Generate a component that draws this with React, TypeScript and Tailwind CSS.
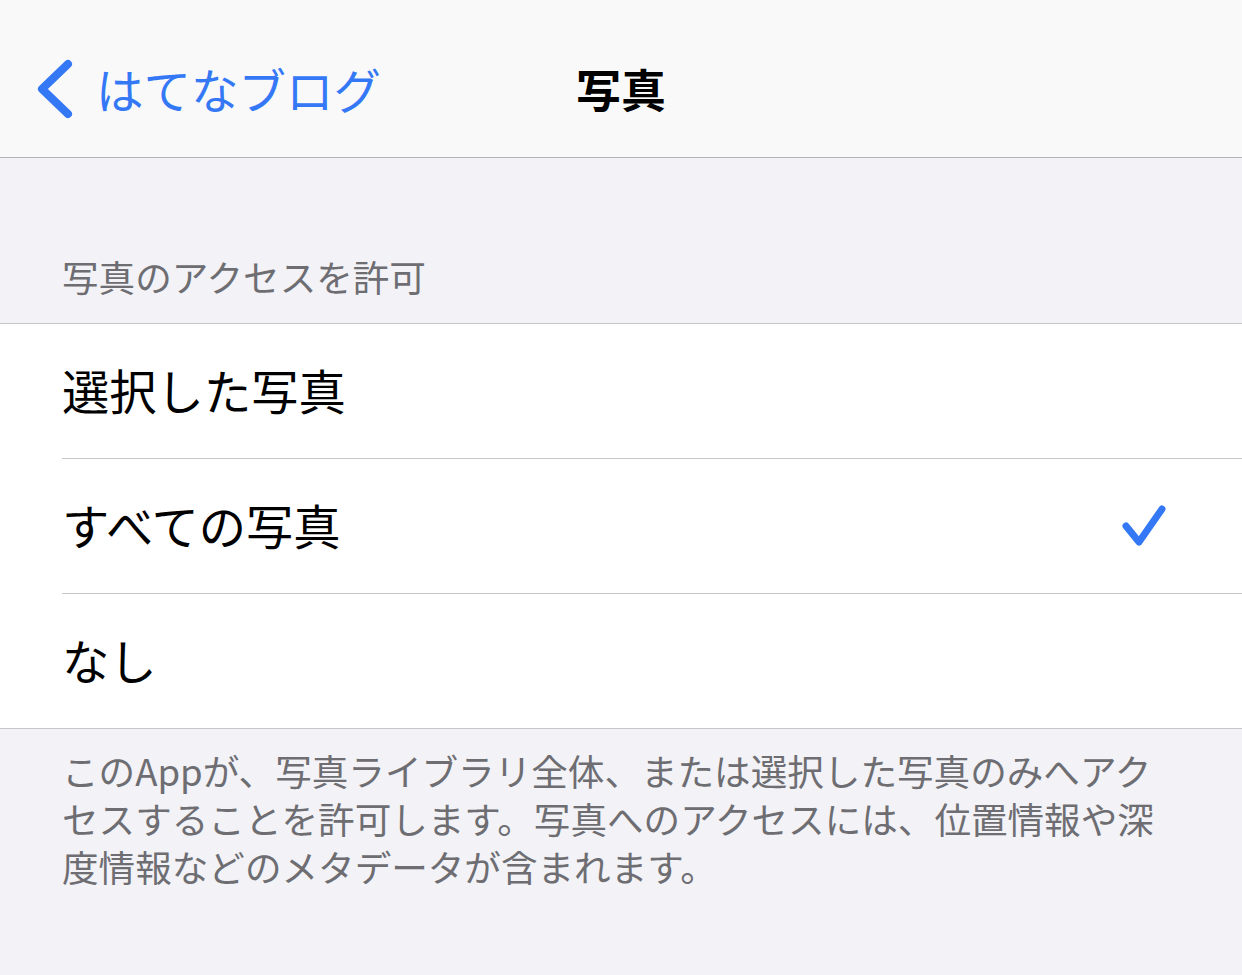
import React from "react";

const font = { fontFamily: '"Noto Sans CJK JP", "Noto Sans", sans-serif' };

export default function App() {
  return (
    <div className="w-[1242px] h-[975px] bg-[#f2f2f7] flex flex-col" style={font}>
      {/* Nav bar */}
      <div className="h-[158px] bg-[#f9f9f9] border-b border-[#b3b3b5] relative flex items-center pt-[20px]">
        <div className="flex items-center pl-[36px]">
          <svg width="40" height="62" viewBox="0 0 40 62" className="mr-[20px] mt-[2px]">
            <polyline points="32,5 6,30 32,55" fill="none" stroke="#3478f6" strokeWidth="8" strokeLinecap="round" strokeLinejoin="round" />
          </svg>
          <span className="text-[47.5px] leading-none text-[#3478f6]">はてなブログ</span>
        </div>
        <div className="absolute left-0 right-0 top-[20px] bottom-0 flex items-center justify-center pointer-events-none">
          <span className="text-[45px] leading-none font-bold text-black">写真</span>
        </div>
      </div>

      {/* Section header */}
      <div className="h-[165px] flex items-end pb-[28px] pl-[62px]">
        <span className="text-[36.6px] leading-[36px] text-[#6d6d72]">写真のアクセスを許可</span>
      </div>

      {/* Rows */}
      <div className="bg-white border-t border-b border-[#c6c6c8]">
        <div className="h-[134px] flex items-center pl-[62px] pb-[3px]">
          <span className="text-[47.3px] leading-none text-black">選択した写真</span>
        </div>
        <div className="ml-[62px] h-px bg-[#c6c6c8]" />
        <div className="h-[134px] flex items-center pl-[62px] pr-[72px] justify-between">
          <span className="text-[47.3px] leading-none text-black pb-[3px]">すべての写真</span>
          <svg width="50" height="48" viewBox="0 0 50 48" className="mt-[4px]">
            <polyline points="6,22 19,38 42,5" fill="none" stroke="#3478f6" strokeWidth="7" strokeLinecap="round" strokeLinejoin="round" />
          </svg>
        </div>
        <div className="ml-[62px] h-px bg-[#c6c6c8]" />
        <div className="h-[134px] flex items-center pl-[62px] pb-[3px]">
          <span className="text-[47.3px] leading-none text-black">なし</span>
        </div>
      </div>

      {/* Footer */}
      <div className="pl-[62px] pt-[18px] text-[36.6px] leading-[48px] text-[#6d6d72]">
        <div className="whitespace-nowrap">このAppが、写真ライブラリ全体、または選択した写真のみへアク</div>
        <div className="whitespace-nowrap">セスすることを許可します。写真へのアクセスには、位置情報や深</div>
        <div className="whitespace-nowrap">度情報などのメタデータが含まれます。</div>
      </div>
    </div>
  );
}
